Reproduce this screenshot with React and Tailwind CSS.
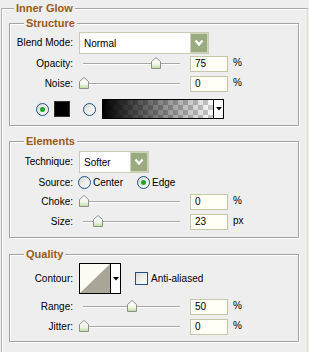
const font = "font-['Liberation_Sans',Arial,sans-serif]";

function Group({ title, className, children }) {
  return (
    <div className={`relative ml-[7px] w-[290px] border border-[#a3a3a3] shadow-[inset_1px_1px_0_#fff,1px_1px_0_#fff] ${className}`}>
      <span className="absolute left-[14px] top-[-8px] bg-[#eeeeee] px-[2px] text-[11px] font-bold leading-[14px] text-[#9a5b17]">
        {title}
      </span>
      {children}
    </div>
  );
}

function Label({ children }) {
  return <div className="w-[63px] shrink-0 text-right">{children}</div>;
}

function Chevron() {
  return (
    <svg width="10" height="8" viewBox="0 0 10 8">
      <path d="M1.5 1.5 L5 5.5 L8.5 1.5" fill="none" stroke="#fff" strokeWidth="2.2" />
    </svg>
  );
}

function Select({ value, width }) {
  return (
    <div className={`ml-[6px] flex h-[22px] items-center border border-[#c9ccb2] bg-white ${width}`}>
      <span className="flex-1 pl-[4px] pt-[1px]">{value}</span>
      <span className="flex h-[20px] w-[18px] items-center justify-center border border-[#cdd6bb] bg-[#9aab80]">
        <Chevron />
      </span>
    </div>
  );
}

function Slider({ pos }) {
  return (
    <svg width="106" height="16" viewBox="0 0 106 16" className="ml-[6px] shrink-0">
      <defs>
        <linearGradient id="thumb" x1="0" y1="0" x2="0" y2="1">
          <stop offset="0" stopColor="#ffffff" />
          <stop offset="0.6" stopColor="#f1f6ea" />
          <stop offset="1" stopColor="#b9dc98" />
        </linearGradient>
      </defs>
      <line x1="4" y1="7.5" x2="101" y2="7.5" stroke="#a8a8a8" />
      <line x1="4" y1="8.5" x2="101" y2="8.5" stroke="#ffffff" />
      <path
        d={`M${pos - 4.5} 12.5 V5.5 L${pos} 1.5 L${pos + 4.5} 5.5 V12.5 Z`}
        fill="url(#thumb)"
        stroke="#8d918a"
      />
    </svg>
  );
}

function Num({ value, unit }) {
  return (
    <>
      <div className="ml-[5px] flex h-[16px] w-[38px] items-center border border-[#c4c8a6] bg-[#fffff6] pl-[4px]">
        {value}
      </div>
      <span className="ml-[5px] -mt-[3px]">{unit}</span>
    </>
  );
}

function SliderRow({ label, pos, value, unit, className }) {
  return (
    <div className={`flex h-[16px] items-center ${className}`}>
      <Label>{label}</Label>
      <Slider pos={pos} />
      <Num value={value} unit={unit} />
    </div>
  );
}

function Radio({ checked }) {
  return (
    <span className="flex h-[13px] w-[13px] shrink-0 items-center justify-center rounded-full border border-[#1d5281] bg-[linear-gradient(135deg,#d8d8d2,#ffffff)]">
      {checked && <span className="h-[5px] w-[5px] rounded-full bg-[#22a323]" />}
    </span>
  );
}

function GradientSwatch() {
  return (
    <div className="ml-[6px] flex h-[20px] w-[122px] border border-black">
      <svg width="110" height="18" viewBox="0 0 110 18">
        <defs>
          <pattern id="checker" width="10" height="10" patternUnits="userSpaceOnUse">
            <rect width="10" height="10" fill="#ffffff" />
            <rect width="5" height="5" fill="#cccccc" />
            <rect x="5" y="5" width="5" height="5" fill="#cccccc" />
          </pattern>
          <linearGradient id="fade" x1="0" y1="0" x2="1" y2="0">
            <stop offset="0" stopColor="#000" stopOpacity="1" />
            <stop offset="1" stopColor="#000" stopOpacity="0" />
          </linearGradient>
        </defs>
        <rect width="110" height="18" fill="url(#checker)" />
        <rect width="110" height="18" fill="url(#fade)" />
      </svg>
      <span className="flex w-[10px] items-center justify-center border-l border-black bg-white">
        <svg width="6" height="4" viewBox="0 0 6 4">
          <path d="M0 0 H6 L3 3.5 Z" fill="#000" />
        </svg>
      </span>
    </div>
  );
}

function ContourSwatch() {
  return (
    <div className="ml-[6px] flex h-[31px] w-[42px] border border-black">
      <svg width="30" height="29" viewBox="0 0 30 29">
        <rect width="30" height="29" fill="#fcfcf4" />
        <path d="M0 29 L30 0 V29 Z" fill="#a9a697" />
      </svg>
      <span className="flex flex-1 items-center justify-center border-l border-black bg-white">
        <svg width="6" height="4" viewBox="0 0 6 4">
          <path d="M0 0 H6 L3 3.5 Z" fill="#000" />
        </svg>
      </span>
    </div>
  );
}

export default function App() {
  return (
    <div className={`h-[352px] w-[309px] overflow-hidden bg-[#eeeeee] pt-[8px] text-[10px] leading-none text-black ${font}`}>
      <div className="relative ml-[1px] h-[360px] w-[307px] border-l border-r border-t border-l-[#b4b4b4] border-r-[#dcdfc8] border-t-[#a8a8a8] shadow-[inset_1px_1px_0_#fff]">
        <span className="absolute left-[12px] top-[-8px] bg-[#eeeeee] px-[2px] text-[11px] font-bold leading-[14px] text-[#9a5b17]">
          Inner Glow
        </span>

        <Group title="Structure" className="mt-[14px] h-[103px] pt-[8px]">
          <div className="flex h-[22px] items-center">
            <Label>Blend Mode:</Label>
            <Select value="Normal" width="w-[130px]" />
          </div>
          <SliderRow label="Opacity:" pos={77} value="75" unit="%" className="mt-[2px]" />
          <SliderRow label="Noise:" pos={5} value="0" unit="%" className="mt-[4px]" />
          <div className="mt-[7px] flex h-[20px] items-center">
            <span className="ml-[26px]">
              <Radio checked />
            </span>
            <span className="ml-[5px] h-[16px] w-[16px] border border-[#333] bg-black" />
            <span className="ml-[13px]">
              <Radio />
            </span>
            <GradientSwatch />
          </div>
        </Group>

        <Group title="Elements" className="mt-[15px] h-[97px] pt-[9px]">
          <div className="flex h-[22px] items-center">
            <Label>Technique:</Label>
            <Select value="Softer" width="w-[70px]" />
          </div>
          <div className="mt-[3px] flex h-[13px] items-center">
            <Label>Source:</Label>
            <span className="ml-[5px] flex w-[59px] items-center">
              <Radio />
              <span className="ml-[2px]">Center</span>
            </span>
            <Radio checked />
            <span className="ml-[2px]">Edge</span>
          </div>
          <SliderRow label="Choke:" pos={5} value="0" unit="%" className="mt-[5px]" />
          <SliderRow label="Size:" pos={19} value="23" unit="px" className="mt-[4px]" />
        </Group>

        <Group title="Quality" className="mt-[16px] h-[88px] pt-[8px]">
          <div className="flex h-[31px] items-center">
            <Label>Contour:</Label>
            <ContourSwatch />
            <span className="ml-[14px] h-[13px] w-[13px] border border-[#1d5281] bg-[linear-gradient(135deg,#dcdcd6,#ffffff)]" />
            <span className="ml-[3px]">Anti-aliased</span>
          </div>
          <SliderRow label="Range:" pos={53} value="50" unit="%" className="mt-[5px]" />
          <SliderRow label="Jitter:" pos={5} value="0" unit="%" className="mt-[4px]" />
        </Group>
      </div>
    </div>
  );
}
